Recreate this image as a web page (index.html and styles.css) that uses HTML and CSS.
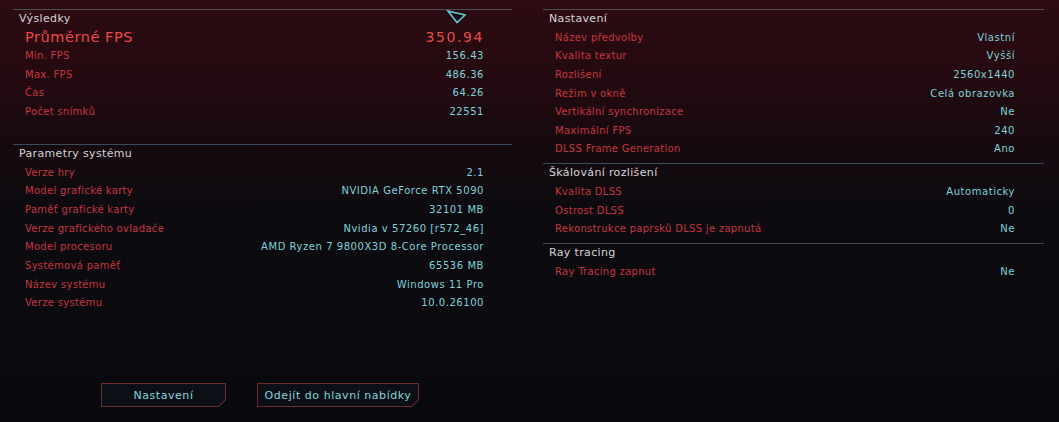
FILE: index.html
```html
<!DOCTYPE html>
<html lang="cs">
<head>
<meta charset="utf-8">
<title>Výsledky</title>
<link rel="stylesheet" href="styles.css">
</head>
<body>
<div class="screen">
  <div class="columns">
    <div class="panel left">
      <section class="sec sec-results">
        <div class="sec-title">Výsledky</div>
        <div class="row big"><span class="lbl">Průměrné FPS</span><span class="val">350.94</span></div>
        <div class="row"><span class="lbl">Min. FPS</span><span class="val">156.43</span></div>
        <div class="row"><span class="lbl">Max. FPS</span><span class="val">486.36</span></div>
        <div class="row"><span class="lbl">Čas</span><span class="val">64.26</span></div>
        <div class="row"><span class="lbl">Počet snímků</span><span class="val">22551</span></div>
      </section>
      <section class="sec sec-system">
        <div class="sec-title">Parametry systému</div>
        <div class="row"><span class="lbl">Verze hry</span><span class="val">2.1</span></div>
        <div class="row"><span class="lbl">Model grafické karty</span><span class="val">NVIDIA GeForce RTX 5090</span></div>
        <div class="row"><span class="lbl">Paměť grafické karty</span><span class="val">32101 MB</span></div>
        <div class="row"><span class="lbl">Verze grafického ovladače</span><span class="val">Nvidia v 57260 [r572_46]</span></div>
        <div class="row"><span class="lbl">Model procesoru</span><span class="val">AMD Ryzen 7 9800X3D 8-Core Processor</span></div>
        <div class="row"><span class="lbl">Systémová paměť</span><span class="val">65536 MB</span></div>
        <div class="row"><span class="lbl">Název systému</span><span class="val">Windows 11 Pro</span></div>
        <div class="row"><span class="lbl">Verze systému</span><span class="val">10.0.26100</span></div>
      </section>
    </div>
    <div class="panel right">
      <section class="sec sec-r1">
        <div class="sec-title">Nastavení</div>
        <div class="row r"><span class="lbl">Název předvolby</span><span class="val">Vlastní</span></div>
        <div class="row r"><span class="lbl">Kvalita textur</span><span class="val">Vyšší</span></div>
        <div class="row r"><span class="lbl">Rozlišení</span><span class="val">2560x1440</span></div>
        <div class="row r"><span class="lbl">Režim v okně</span><span class="val">Celá obrazovka</span></div>
        <div class="row r"><span class="lbl">Vertikální synchronizace</span><span class="val">Ne</span></div>
        <div class="row r"><span class="lbl">Maximální FPS</span><span class="val">240</span></div>
        <div class="row r"><span class="lbl">DLSS Frame Generation</span><span class="val">Ano</span></div>
      </section>
      <section class="sec sec-r2">
        <div class="sec-title">Škálování rozlišení</div>
        <div class="row r"><span class="lbl">Kvalita DLSS</span><span class="val">Automaticky</span></div>
        <div class="row r"><span class="lbl">Ostrost DLSS</span><span class="val">0</span></div>
        <div class="row r"><span class="lbl">Rekonstrukce paprsků DLSS je zapnutá</span><span class="val">Ne</span></div>
      </section>
      <section class="sec sec-r3">
        <div class="sec-title">Ray tracing</div>
        <div class="row r"><span class="lbl">Ray Tracing zapnut</span><span class="val">Ne</span></div>
      </section>
    </div>
  </div>
  <div class="buttons">
    <button class="btn btn-settings">Nastavení</button>
    <button class="btn btn-exit">Odejít do hlavní nabídky</button>
  </div>
  <svg class="cursor" width="22" height="18" viewBox="0 0 22 18">
    <path d="M2 2 L19 6 L11 13.5 Z" fill="#120a10" stroke="#63c9cf" stroke-width="1.6" stroke-linejoin="miter"/>
  </svg>
</div>
</body>
</html>
```
FILE: styles.css
```css
* { box-sizing: border-box; }
html, body { margin: 0; padding: 0; }
body {
  width: 1059px;
  height: 422px;
  overflow: hidden;
  font-family: "DejaVu Sans", "Noto Sans", sans-serif;
  background: #08090d;
}
.screen {
  position: relative;
  width: 1059px;
  height: 422px;
  background:
    linear-gradient(180deg, #2c0b11 0%, #240a10 18%, #160a0f 34%, #0d0b10 50%, #08090e 100%);
  padding-top: 9px;
}
.columns {
  display: flex;
  padding-left: 13px;
  gap: 31px;
}
.panel { display: flex; flex-direction: column; }
.left { width: 499px; }
.right { width: 501px; }
.sec {
  border-top: 1px solid #4e5058;
  display: flex;
  flex-direction: column;
}
.sec-title {
  height: 18px;
  line-height: 18px;
  padding-left: 6px;
  font-size: 11px;
  letter-spacing: 0.35px;
  color: #d6d4d6;
}
.row {
  display: flex;
  justify-content: space-between;
  align-items: center;
  height: 18.7px;
  padding-left: 12px;
  padding-right: 28px;
  font-size: 10px;
}
.row.r { height: 18.6px; padding-right: 29px; }
.lbl { color: #c6363c; letter-spacing: 0.3px; }
.val { color: #7fd2da; letter-spacing: 0.55px; }
.row.big { height: 18px; }
.row.big .lbl { color: #ee4848; font-size: 14.5px; letter-spacing: 0.55px; }
.row.big .val { color: #e84a4a; font-size: 14px; letter-spacing: 1.6px; }
.sec-results { padding-bottom: 23px; }
.sec-system { border-top-color: #3b4a5a; }
.sec-r1 { padding-bottom: 5px; }
.sec-r2 { border-top-color: #3b4a5a; padding-bottom: 5px; }
.sec-r3 { border-top-color: #3b4a5a; }

.buttons {
  position: absolute;
  left: 101px;
  top: 383px;
  display: flex;
  gap: 31px;
}
.btn {
  position: relative;
  height: 24px;
  border: none;
  padding: 0;
  font-family: "DejaVu Sans", sans-serif;
  font-size: 11px;
  letter-spacing: 0.55px;
  color: #86d4dc;
  background: #6d2b2e;
  clip-path: polygon(0 0, 100% 0, 100% calc(100% - 7px), calc(100% - 7px) 100%, 0 100%);
  z-index: 0;
}
.btn::before {
  content: "";
  position: absolute;
  inset: 1px;
  background: #0c0f16;
  clip-path: polygon(0 0, 100% 0, 100% calc(100% - 6.5px), calc(100% - 6.5px) 100%, 0 100%);
  z-index: -1;
}
.btn-settings { width: 125px; }
.btn-exit { width: 162px; }
.cursor {
  position: absolute;
  left: 446px;
  top: 9px;
}
```
